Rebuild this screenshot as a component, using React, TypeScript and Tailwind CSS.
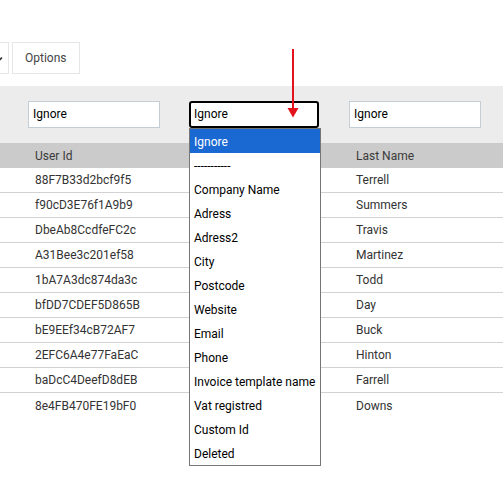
import React from "react";

const rows = [
  ["88F7B33d2bcf9f5", "Terrell"],
  ["f90cD3E76f1A9b9", "Summers"],
  ["DbeAb8CcdfeFC2c", "Travis"],
  ["A31Bee3c201ef58", "Martinez"],
  ["1bA7A3dc874da3c", "Todd"],
  ["bfDD7CDEF5D865B", "Day"],
  ["bE9EEf34cB72AF7", "Buck"],
  ["2EFC6A4e77FaEaC", "Hinton"],
  ["baDcC4DeefD8dEB", "Farrell"],
  ["8e4FB470FE19bF0", "Downs"],
];

const options = [
  "Ignore",
  "-----------",
  "Company Name",
  "Adress",
  "Adress2",
  "City",
  "Postcode",
  "Website",
  "Email",
  "Phone",
  "Invoice template name",
  "Vat registred",
  "Custom Id",
  "Deleted",
];

export default function App() {
  return (
    <div
      className="relative w-[503px] h-[492px] bg-white overflow-hidden text-[12px]"
      style={{ fontFamily: "Roboto, 'Liberation Sans', sans-serif" }}
    >
      {/* toolbar */}
      <div className="h-[86px] flex items-start pt-[42px]">
        <div className="w-[9px] h-[32px] border border-l-0 border-[#e6e6e6] bg-white overflow-hidden flex items-center">
          <svg width="8" height="8" viewBox="0 0 8 8" className="-ml-[5px] mt-[1px]">
            <path d="M1 2.5 L4 5.5 L7 2.5" stroke="#333" strokeWidth="1.6" fill="none" />
          </svg>
        </div>
        <div className="ml-[3px] w-[68px] h-[32px] border border-[#e6e6e6] bg-white flex items-center pl-[12px] text-[#444]">
          Options
        </div>
      </div>

      {/* filter band */}
      <div className="h-[57px] bg-[#ececec] flex items-center pl-[28px]">
        <div className="w-[161px]">
          <div className="w-[132px] h-[27px] bg-white border border-[#c3cdd5] flex items-center pl-[4px] pb-[2px] text-black">
            Ignore
          </div>
        </div>
        <div className="w-[160px]">
          <div className="w-[130px] h-[27px] bg-white border-2 border-black rounded-[3px] flex items-center pl-[3px] pb-[2px] text-black">
            Ignore
          </div>
        </div>
        <div className="w-[132px] h-[27px] bg-white border border-[#c3cdd5] flex items-center pl-[4px] pb-[2px] text-black">
          Ignore
        </div>
      </div>

      {/* header */}
      <div className="h-[25px] bg-[#cbcbcb] flex items-center pl-[28px] text-[#3a3a3a]">
        <div className="w-[161px] pl-[7px]">User Id</div>
        <div className="w-[160px] pl-[7px]"></div>
        <div className="pl-[7px]">Last Name</div>
      </div>

      {/* rows */}
      <div>
        {rows.map((r, i) => (
          <div
            key={i}
            className={
              i < rows.length - 1
                ? "h-[25px] flex items-center pl-[28px] text-[#333] border-b border-[#d2d2d2]"
                : "h-[25px] flex items-center pl-[28px] text-[#333]"
            }
          >
            <div className="w-[161px] pl-[7px]">{r[0]}</div>
            <div className="w-[160px] pl-[7px]"></div>
            <div className="pl-[7px]">{r[1]}</div>
          </div>
        ))}
      </div>

      {/* dropdown list */}
      <div className="absolute left-[189px] top-[128px] w-[132px] bg-white border border-[#767676] flex flex-col text-black">
        {options.map((o, i) => (
          <div
            key={i}
            className={
              i === 0
                ? "h-[24px] flex items-center pl-[4px] pt-[2px] bg-[#1a69d3] text-white"
                : "h-[24px] flex items-center pl-[4px] pt-[2px]"
            }
          >
            {o}
          </div>
        ))}
      </div>

      {/* red arrow */}
      <svg
        className="absolute left-[284px] top-[48px]"
        width="18"
        height="72"
        viewBox="0 0 18 72"
      >
        <line x1="9" y1="1" x2="9" y2="62" stroke="#e3121b" strokeWidth="2" />
        <polygon points="3.5,60 14.5,60 9,69.5" fill="#e3121b" />
      </svg>
    </div>
  );
}
